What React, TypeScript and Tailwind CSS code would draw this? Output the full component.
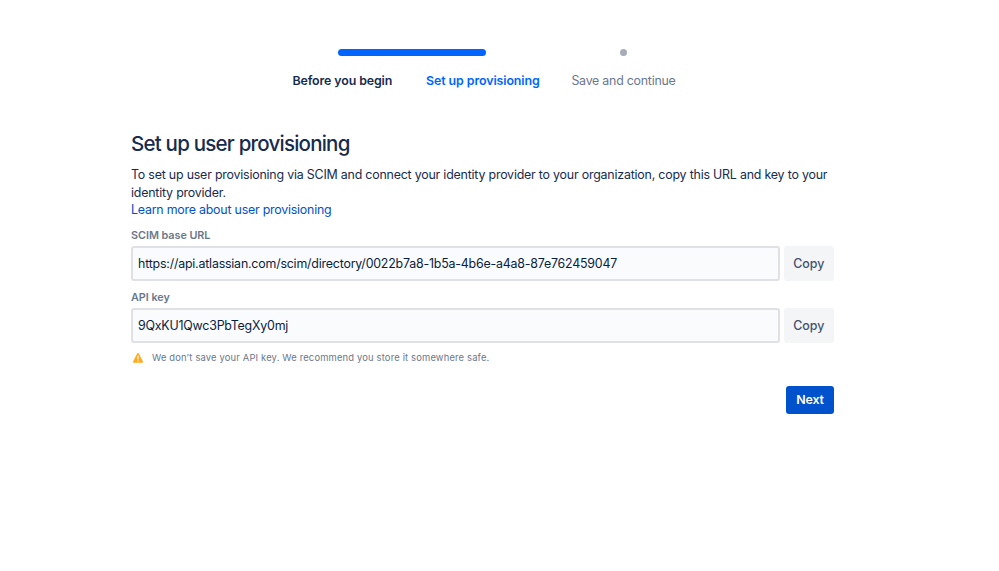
import React from "react";

function Step({ label, className, children }: { label: string; className: string; children?: React.ReactNode }) {
  return (
    <li className="flex w-[140.6px] flex-col items-center">
      <div className="flex h-2 w-full justify-center">{children}</div>
      <span className={`mt-[14px] whitespace-nowrap text-[12.4px] leading-5 ${className}`}>{label}</span>
    </li>
  );
}

function Field({ label, value, className }: { label: string; value: string; className: string }) {
  return (
    <div className={className}>
      <div className="text-[10.8px] font-semibold leading-[14px] tracking-[-0.03px] text-[#6b778c]">{label}</div>
      <div className="mt-[3px] flex h-[35px] gap-1">
        <div className="flex w-[649px] items-center rounded-[3px] border-2 border-[#dfe1e6] bg-[#fafbfc] pl-[5px] pt-px text-[12.4px] tracking-[-0.2px] text-[#091e42]">
          {value}
        </div>
        <button className="flex w-[50.5px] items-center justify-center rounded-[3px] bg-[#f4f5f7] pt-px text-[12.4px] font-[550] tracking-[-0.05px] text-[#42526e]">Copy</button>
      </div>
    </div>
  );
}

export default function App() {
  return (
    <main className="h-[571px] w-[999px] overflow-hidden bg-white font-['Inter',sans-serif] text-[#172b4d]">
      <ol className="flex pl-[272px] pt-[49px]">
        <Step label="Before you begin" className="font-semibold tracking-[-0.11px] text-[#172b4d]">
          <div className="ml-[140px] h-[7px] w-[148px] shrink-0 rounded-full bg-[#0065ff]" />
        </Step>
        <Step label="Set up provisioning" className="font-semibold tracking-[-0.09px] text-[#0065ff]" />
        <Step label="Save and continue" className="tracking-[-0.24px] text-[#6b778c]">
          <div className="h-[7px] w-[7px] rounded-full bg-[#a5adba]" />
        </Step>
      </ol>
      <section className="ml-[131px] mt-[41px] w-[703px]">
        <h1 className="text-[20.5px] font-[550] leading-6 tracking-[-0.78px]">Set up user provisioning</h1>
        <p className="mt-[10px] whitespace-nowrap text-[12.4px] leading-[17.5px] tracking-[-0.2px]">
          To set up user provisioning via SCIM and connect your identity provider to your organization, copy this URL and key to your<br />
          identity provider.<br />
          <a className="tracking-[-0.22px] text-[#0052cc]">Learn more about user provisioning</a>
        </p>
        <Field className="mt-[10.5px]" label="SCIM base URL" value="https://api.atlassian.com/scim/directory/0022b7a8-1b5a-4b6e-a4a8-87e762459047" />
        <Field className="mt-[10px]" label="API key" value="9QxKU1Qwc3PbTegXy0mj" />
        <div className="mt-[8px] flex h-[14px] items-center text-[9.4px] tracking-[0.17px] text-[#6b778c]">
          <svg className="ml-px mr-2 h-3 w-3" viewBox="0 0 12 12">
            <path d="M5.1 1.5 1.1 9.5c-.3.7 0 1.2.7 1.2h8.4c.7 0 1-.5.7-1.2L6.9 1.5c-.4-.7-1.4-.7-1.8 0Z" fill="#ffab1a" />
            <path d="M6 4.2v2.8" stroke="white" strokeWidth="1.2" strokeLinecap="round" />
            <circle cx="6" cy="9" r=".65" fill="white" />
          </svg>
          <span className="pt-px">We don’t save your API key. We recommend you store it somewhere safe.</span>
        </div>
        <div className="mt-[21px] flex justify-end">
          <button className="h-7 w-[48px] rounded-[3px] bg-[#0052cc] pt-px text-[12.4px] font-semibold tracking-[-0.2px] text-white">Next</button>
        </div>
      </section>
    </main>
  );
}
